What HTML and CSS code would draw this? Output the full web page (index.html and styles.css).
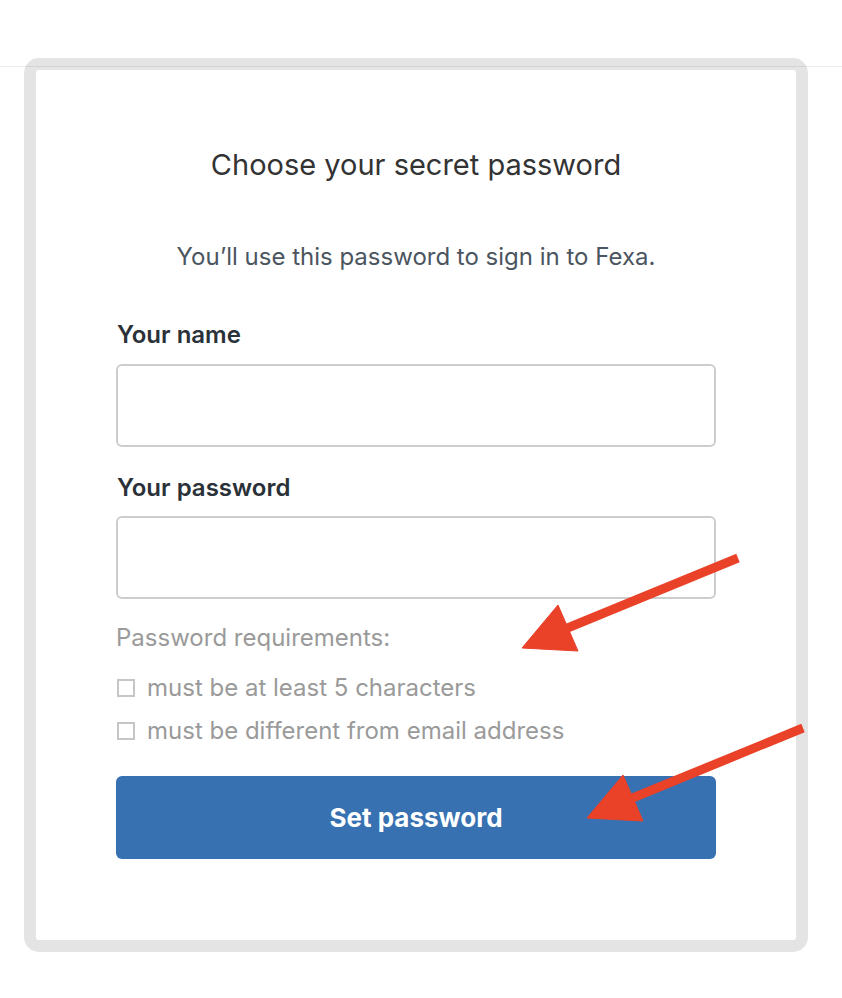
FILE: index.html
```html
<!DOCTYPE html>
<html lang="en">
<head>
<meta charset="utf-8">
<title>Choose your secret password</title>
<link rel="stylesheet" href="styles.css">
</head>
<body>
<div class="card">
  <h1 class="title">Choose your secret password</h1>
  <p class="subtitle">You’ll use this password to sign in to Fexa.</p>
  <form class="form">
    <label class="label" for="name">Your name</label>
    <input class="input" id="name" type="text">
    <label class="label label-second" for="pw">Your password</label>
    <input class="input" id="pw" type="password">
    <div class="req-title">Password requirements:</div>
    <ul class="req-list">
      <li class="req"><span class="box"></span>must be at least 5 characters</li>
      <li class="req"><span class="box"></span>must be different from email address</li>
    </ul>
    <button class="btn" type="button">Set password</button>
  </form>
</div>
<svg class="arrows" width="842" height="998" viewBox="0 0 842 998">
  <g fill="#ea4129" stroke="#ea4129">
    <line x1="738" y1="558" x2="548" y2="636" stroke-width="9"/>
    <polygon points="522,648 558,605 578,651" stroke-width="1"/>
    <line x1="803" y1="728" x2="613" y2="806" stroke-width="9"/>
    <polygon points="587,818 623,775 643,821" stroke-width="1"/>
  </g>
</svg>
</body>
</html>
```
FILE: styles.css
```css
html, body {
  margin: 0;
  padding: 0;
}
body {
  position: relative;
  width: 842px;
  height: 998px;
  overflow: hidden;
  background: #fff linear-gradient(#ececec, #ececec) no-repeat 0 66px / 100% 1px;
  font-family: Inter, "Liberation Sans", Arial, sans-serif;
}
.card {
  box-sizing: border-box;
  width: 784px;
  height: 894px;
  margin: 58px 0 0 24px;
  border: 12px solid rgba(0, 0, 0, 0.105);
  border-radius: 15px;
  background: #fff;
  background-clip: padding-box;
  padding: 78px 80px 0 80px;
}
.title {
  margin: 0;
  font-size: 29px;
  line-height: 34px;
  font-weight: normal;
  color: #333;
  text-align: center;
}
.subtitle {
  margin: 61px 0 0;
  font-size: 24px;
  line-height: 28px;
  color: #4b5560;
  text-align: center;
}
.form {
  display: flex;
  flex-direction: column;
  margin-top: 50px;
}
.label {
  display: block;
  font-size: 24px;
  line-height: 28px;
  font-weight: 600;
  color: #2b3138;
  padding-left: 1px;
}
.label-second {
  margin-top: 27px;
}
.input {
  box-sizing: border-box;
  width: 600px;
  height: 83px;
  margin: 15px 0 0;
  border: 2px solid #cdcdcd;
  border-radius: 6px;
  background: #fff;
  font-size: 22px;
  padding: 0 14px;
}
#pw {
  margin-top: 14px;
}
.req-title {
  margin-top: 25px;
  font-size: 24px;
  line-height: 28px;
  color: #9a9a9a;
}
.req-list {
  list-style: none;
  margin: 22px 0 0;
  padding: 0;
  display: flex;
  flex-direction: column;
  gap: 15px;
}
.req {
  display: flex;
  align-items: center;
  gap: 12px;
  font-size: 24px;
  line-height: 28px;
  color: #9a9a9a;
  padding-left: 1px;
}
.box {
  box-sizing: border-box;
  width: 18px;
  height: 18px;
  border: 2px solid #c6c6c6;
  flex: none;
}
.btn {
  box-sizing: border-box;
  width: 600px;
  height: 83px;
  margin-top: 31px;
  border: none;
  border-radius: 6px;
  background: #3771b1;
  color: #fff;
  font-family: Inter, "Liberation Sans", Arial, sans-serif;
  font-size: 26px;
  font-weight: bold;
}
.arrows {
  position: absolute;
  left: 0;
  top: 0;
  pointer-events: none;
}
```
